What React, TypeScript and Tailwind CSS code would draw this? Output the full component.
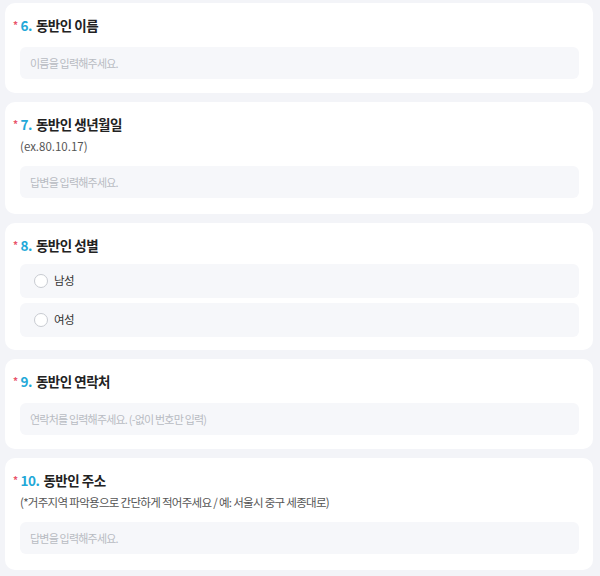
import React from 'react';

const font = { fontFamily: '"Noto Sans CJK KR", "Noto Sans", sans-serif' };

function Title({ no, text }: { no: number; text: string }) {
  return (
    <div className="flex items-center h-[20px] pl-[8px] text-[13.5px] font-bold tracking-[-0.5px] text-[#222]">
      <span className="text-[#e9546b] text-[10px] mr-[3px] -mt-[1px]">*</span>
      <span className="text-[#22a8d8] mr-[4px]">{no}.</span>
      <span>{text}</span>
    </div>
  );
}

function Input({ placeholder }: { placeholder: string }) {
  return (
    <div className="ml-[15px] mr-[14px] h-[32px] rounded-[6px] bg-[#f6f7fa] flex items-center px-[10px] text-[11px] tracking-[-0.8px] text-[#b8bbc2]">
      {placeholder}
    </div>
  );
}

function Radio({ label }: { label: string }) {
  return (
    <div className="ml-[15px] mr-[14px] h-[34px] rounded-[6px] bg-[#f6f7fa] flex items-center pl-[14px] gap-[6px] text-[11.5px] tracking-[-0.5px] text-[#333]">
      <span className="w-[14px] h-[14px] rounded-full border border-[#c8cbd1] bg-white" />
      {label}
    </div>
  );
}

function Card({ pb, children }: { pb: string; children: React.ReactNode }) {
  return <div className={`bg-white rounded-[10px] pt-[12px] ${pb}`}>{children}</div>;
}

export default function App() {
  return (
    <div className="w-[600px] h-[576px] bg-[#f3f4f8] overflow-hidden" style={font}>
      <div className="flex flex-col gap-[9px] pl-[5px] pr-[7px] pt-[3px]">
        <Card pb="pb-[14px]">
          <Title no={6} text="동반인 이름" />
          <div className="mt-[12px]">
            <Input placeholder="이름을 입력해주세요." />
          </div>
        </Card>
        <Card pb="pb-[16px]">
          <Title no={7} text="동반인 생년월일" />
          <div className="pl-[15px] mt-[3px] text-[11.5px] text-[#555] h-[18px] leading-[18px]">(ex.80.10.17)</div>
          <div className="mt-[11px]">
            <Input placeholder="답변을 입력해주세요." />
          </div>
        </Card>
        <Card pb="pb-[13px]">
          <Title no={8} text="동반인 성별" />
          <div className="mt-[9px] flex flex-col gap-[5px]">
            <Radio label="남성" />
            <Radio label="여성" />
          </div>
        </Card>
        <Card pb="pb-[14px]">
          <Title no={9} text="동반인 연락처" />
          <div className="mt-[12px]">
            <Input placeholder="연락처를 입력해주세요. (-없이 번호만 입력)" />
          </div>
        </Card>
        <Card pb="pb-[16px]">
          <Title no={10} text="동반인 주소" />
          <div className="pl-[15px] mt-[3px] text-[11.5px] tracking-[-0.7px] text-[#555] h-[18px] leading-[18px]">
            (*거주지역 파악용으로 간단하게 적어주세요 / 예: 서울시 중구 세종대로)
          </div>
          <div className="mt-[11px]">
            <Input placeholder="답변을 입력해주세요." />
          </div>
        </Card>
      </div>
    </div>
  );
}
